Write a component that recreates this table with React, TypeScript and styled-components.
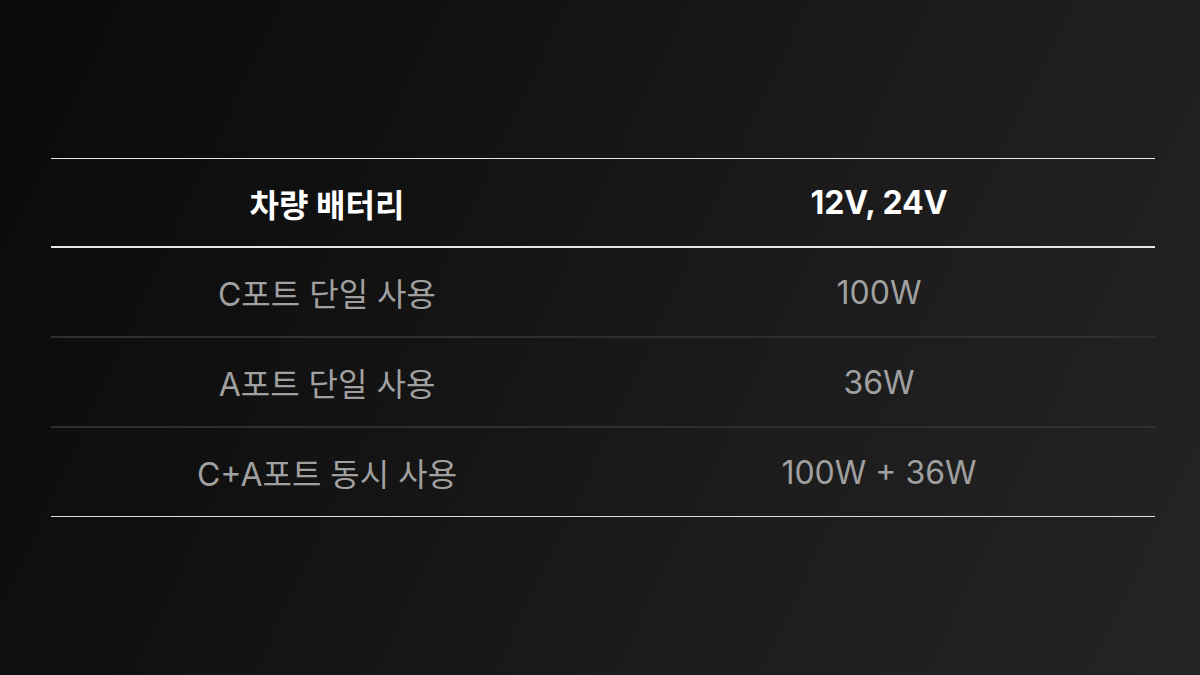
import React from "react";
import styled, { createGlobalStyle } from "styled-components";

const GlobalStyle = createGlobalStyle`
  html, body {
    margin: 0;
    padding: 0;
  }
  body {
    font-family: Inter, "Noto Sans CJK KR", sans-serif;
  }
`;

const Page = styled.div`
  width: 1200px;
  height: 675px;
  box-sizing: border-box;
  padding-left: 51px;
  display: flex;
  align-items: center;
  background: linear-gradient(115deg, #0a0a0a 0%, #111111 30%, #1c1c1c 65%, #242424 100%);
`;

const Table = styled.div`
  width: 1104px;
  border-top: 1px solid #e6e6e6;
  border-bottom: 1px solid #dcdcdc;
`;

const Row = styled.div<{ $head?: boolean; $last?: boolean }>`
  display: grid;
  grid-template-columns: 1fr 1fr;
  height: ${(p) => (p.$head ? 87 : 88)}px;
  align-items: center;
  border-bottom: ${(p) =>
    p.$last ? "none" : p.$head ? "2px solid #e6e6e6" : "2px solid #2f2f2f"};
`;

const Cell = styled.div<{ $head?: boolean }>`
  text-align: center;
  font-size: 32px;
  font-weight: ${(p) => (p.$head ? 700 : 400)};
  color: ${(p) => (p.$head ? "#ffffff" : "#a0a0a0")};
`;

const rows = [
  ["C포트 단일 사용", "100W"],
  ["A포트 단일 사용", "36W"],
  ["C+A포트 동시 사용", "100W + 36W"],
];

export default function App() {
  return (
    <>
      <GlobalStyle />
      <Page>
        <Table>
          <Row $head>
            <Cell $head>차량 배터리</Cell>
            <Cell $head>12V, 24V</Cell>
          </Row>
          {rows.map(([label, value], i) => (
            <Row key={label} $last={i === rows.length - 1}>
              <Cell>{label}</Cell>
              <Cell>{value}</Cell>
            </Row>
          ))}
        </Table>
      </Page>
    </>
  );
}
